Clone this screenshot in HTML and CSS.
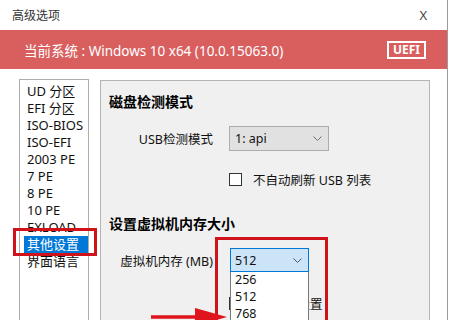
FILE: index.html
```html
<!DOCTYPE html>
<html lang="zh-CN">
<head>
<meta charset="UTF-8" />
<title>高级选项</title>
<link rel="stylesheet" href="styles.css">
</head>
<body>
  <div class="window">
    <div class="titlebar">
      <span class="title">高级选项</span>
      <span class="close">X</span>
    </div>

    <div class="sysbar">
      <span class="sysinfo">当前系统 : Windows 10 x64 (10.0.15063.0)</span>
      <span class="badge">UEFI</span>
    </div>

    <div class="main">
      <ul class="nav">
        <li>UD 分区</li>
        <li>EFI 分区</li>
        <li>ISO-BIOS</li>
        <li>ISO-EFI</li>
        <li>2003 PE</li>
        <li>7 PE</li>
        <li>8 PE</li>
        <li>10 PE</li>
        <li>EXLOAD</li>
        <li class="active">其他设置<span class="mark"></span></li>
        <li>界面语言</li>
      </ul>

      <div class="panel">
        <section class="group">
          <h2>磁盘检测模式</h2>
          <div class="row">
            <label class="label">USB检测模式</label>
            <div class="combo combo-wide">
              <span>1: api</span>
              <svg class="chev" viewBox="0 0 9 5" width="9" height="5"><polyline points="0.5,0.5 4.5,4.5 8.5,0.5" fill="none" stroke="#6d6d6d" stroke-width="1"/></svg>
            </div>
          </div>
          <div class="row check-row">
            <span class="checkbox"></span>
            <span>不自动刷新 USB 列表</span>
          </div>
        </section>

        <section class="group">
          <h2>设置虚拟机内存大小</h2>
          <div class="row">
            <label class="label">虚拟机内存 (MB)</label>
            <div class="combo-wrap">
              <div class="combo combo-open">
                <span>512</span>
                <svg class="chev" viewBox="0 0 9 5" width="9" height="5"><polyline points="0.5,0.5 4.5,4.5 8.5,0.5" fill="none" stroke="#555" stroke-width="1"/></svg>
              </div>
              <ul class="dropdown">
                <li>256</li>
                <li>512</li>
                <li>768</li>
              </ul>
            </div>
          </div>
          <div class="row check-row hidden-row">
            <span class="checkbox"></span>
            <span class="hidden-text">记住此设置</span>
          </div>
        </section>

        <!-- annotation overlays -->
        <div class="callout"></div>
        <svg class="arrow" viewBox="0 0 85 24" width="85" height="24">
          <line x1="2" y1="14" x2="60" y2="14" stroke="#e0141c" stroke-width="3.5"/>
          <polygon points="46,5 78,14 46,23" fill="#e0141c"/>
        </svg>
      </div>
    </div>
  </div>
</body>
</html>
```

FILE: styles.css
```css
* {
  box-sizing: border-box;
}
html, body {
  margin: 0;
  padding: 0;
  width: 450px;
  height: 320px;
  overflow: hidden;
  background: #fff;
  font-family: "Noto Sans", "Noto Sans CJK SC", sans-serif;
  color: #111;
}
.window {
  width: 448px;
  height: 320px;
  overflow: hidden;
  border-right: 1px solid #9a9a9a;
  display: flex;
  flex-direction: column;
}

/* title bar */
.titlebar {
  height: 30px;
  display: flex;
  align-items: center;
  justify-content: space-between;
  padding: 0 20px 0 12px;
}
.title {
  font-size: 12px;
  color: #333;
}
.close {
  font-size: 13px;
  color: #444;
}

/* red system bar */
.sysbar {
  height: 39px;
  background: #d95f5f;
  color: #fff;
  display: flex;
  align-items: center;
  justify-content: space-between;
  padding: 0 21px 0 24px;
}
.sysinfo {
  font-size: 13.5px;
}
.badge {
  border: 2px solid #fff;
  font-size: 12px;
  font-weight: 700;
  line-height: 14px;
  padding: 0 4px;
  margin-top: 1px;
}

/* main area */
.main {
  flex: 1;
  display: flex;
  padding: 10px 0 0 19px;
  gap: 11px;
  min-height: 0;
}
.nav {
  list-style: none;
  margin: 0;
  padding: 3px 0 0 4px;
  width: 70px;
  border: 1px solid #adadad;
  border-bottom: none;
  font-size: 13px;
}
.nav li {
  line-height: 17px;
  height: 17px;
  padding-left: 3px;
  white-space: nowrap;
}
.nav li.active {
  position: relative;
  background: #0078d7;
  color: #fff;
}
.mark {
  position: absolute;
  left: -11px;
  top: -8px;
  width: 84px;
  height: 28px;
  border: 3px solid #d0131a;
}

/* settings panel */
.panel {
  position: relative;
  width: 330px;
  margin-top: 1px;
  background: #f0f0f0;
  border: 1px solid #b4b4b4;
  border-bottom: none;
  padding: 12px 0 0 8px;
  font-size: 12.5px;
}
.group h2 {
  margin: 0;
  font-size: 14px;
  line-height: 18px;
  font-weight: 700;
  color: #000;
}
.group + .group {
  margin-top: 26px;
}
.row {
  display: grid;
  grid-template-columns: 104px 1fr;
  column-gap: 16px;
  align-items: center;
  margin-top: 15px;
}
.label {
  text-align: right;
  color: #111;
}
.combo {
  height: 25px;
  display: flex;
  align-items: center;
  justify-content: space-between;
  padding: 0 6px 0 5px;
  border: 1px solid #adadad;
  background: #e1e1e1;
}
.combo-wide {
  width: 100px;
}
.combo-wrap {
  position: relative;
  width: 79px;
  margin-left: 1px;
}
.combo-open {
  height: 24px;
  background: #cce4f7;
  border-color: #0078d7;
  padding-left: 4px;
}
.dropdown {
  position: absolute;
  top: 100%;
  left: 0;
  width: 79px;
  margin: 0;
  padding: 0 0 0 4px;
  list-style: none;
  background: #fff;
  border: 1px solid #7a7a7a;
  border-top: none;
  height: 60px;
  z-index: 2;
}
.dropdown li {
  line-height: 17px;
  margin-top: -1px;
}
.dropdown li + li {
  margin-top: 0;
}
.check-row {
  display: flex;
  align-items: center;
  gap: 11px;
  padding-left: 120px;
  margin-top: 19px;
}
.hidden-row {
  margin-top: 22px;
}
.hidden-text {
  margin-left: 7px;
}
.checkbox {
  width: 13px;
  height: 13px;
  border: 1px solid #333;
  background: #fff;
}

/* annotations */
.callout {
  position: absolute;
  left: 114px;
  top: 156px;
  width: 113px;
  height: 100px;
  border: 3px solid #d0131a;
  z-index: 3;
}
.arrow {
  position: absolute;
  left: 48px;
  top: 222px;
  z-index: 3;
}
```
